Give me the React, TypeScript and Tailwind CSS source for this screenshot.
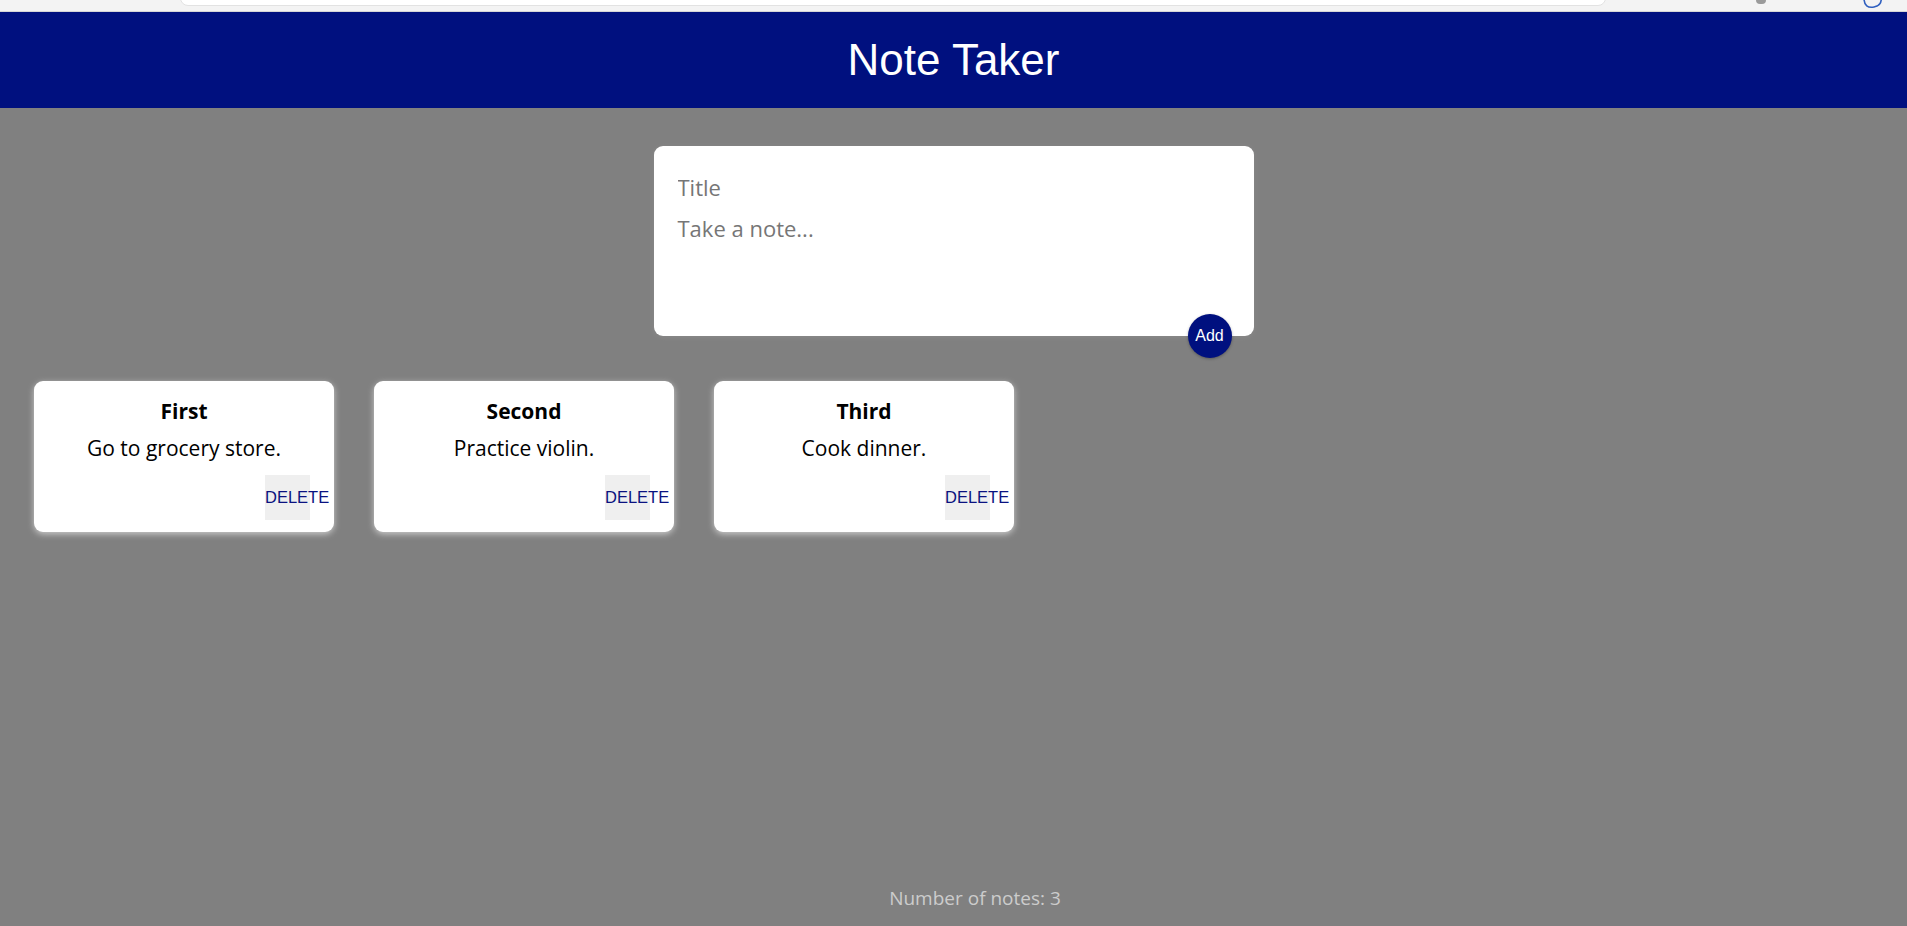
import React, { useState } from 'react';

type Note = { title: string; content: string };

const initialNotes: Note[] = [
  { title: 'First', content: 'Go to grocery store.' },
  { title: 'Second', content: 'Practice violin.' },
  { title: 'Third', content: 'Cook dinner.' },
];

const styles = {
  page: 'h-screen flex flex-col bg-[#808080] overflow-hidden font-["Open_Sans","Noto_Sans",sans-serif]',
  chrome: 'relative h-[12px] shrink-0 bg-[#f3f3f3] border-b border-[#d6d6d6]',
  header: 'h-[96px] shrink-0 flex items-center justify-center bg-[#00107f]',
  title: 'text-white text-[44px] leading-[50px] font-["Comic_Sans_MS","Liberation_Sans",sans-serif]',
  form: 'relative mx-auto mt-[38px] w-[600px] h-[190px] bg-white rounded-[9px] pt-[20px] px-[19px] shadow-[0_1px_5px_#8a8989]',
  input: 'block w-full h-[42px] p-[5px] text-[22px] leading-[30px] outline-none placeholder:text-[#767676]',
  textarea: 'block w-full h-[100px] p-[5px] text-[22px] leading-[30px] outline-none resize-none overflow-hidden placeholder:text-[#767676]',
  add: 'absolute right-[22px] bottom-[-22px] w-[44px] h-[44px] rounded-full bg-[#00107f] text-white text-[16px] font-["Liberation_Sans",sans-serif] flex items-center justify-center shadow-[0_1px_3px_rgba(0,0,0,0.3)]',
  notes: 'flex flex-row gap-[40px] pl-[34px] mt-[45px]',
  note: 'w-[300px] h-[151px] bg-white rounded-[9px] pt-[16px] pb-[12px] text-black text-center flex flex-col shadow-[0_2px_6px_#cccccc]',
  noteTitle: 'text-[21px] leading-[28px] font-bold',
  noteBody: 'mt-[9px] text-[21px] leading-[28px]',
  del: 'self-end mt-[13px] mr-[24px] w-[45px] h-[45px] bg-[#efefef] flex items-center',
  delText: 'whitespace-nowrap text-[16.5px] text-[#0a1280] font-["Liberation_Sans",sans-serif]',
  footer: 'pb-[15px] pl-[43px] text-center text-[19px] leading-[26px] text-[#cccccc]',
};

function NoteCard({ note, onDelete }: { note: Note; onDelete: () => void }) {
  return (
    <div className={styles.note}>
      <h1 className={styles.noteTitle}>{note.title}</h1>
      <p className={styles.noteBody}>{note.content}</p>
      <button className={styles.del} onClick={onDelete}>
        <span className={styles.delText}>DELETE</span>
      </button>
    </div>
  );
}

export default function App() {
  const [notes, setNotes] = useState<Note[]>(initialNotes);
  const [draft, setDraft] = useState<Note>({ title: '', content: '' });

  const addNote = (e: React.FormEvent) => {
    e.preventDefault();
    if (!draft.title && !draft.content) return;
    setNotes([...notes, draft]);
    setDraft({ title: '', content: '' });
  };

  return (
    <div className={styles.page}>
      {/* browser chrome strip at the top of the capture */}
      <div className={styles.chrome}>
        <div className="absolute left-[180px] top-[-10px] w-[1426px] h-[16px] bg-white rounded-b-[8px] border border-[#e2e2e2]" />
        <div className="absolute left-[1756px] top-[-4px] w-[10px] h-[8px] rounded-full bg-[#9a9a9a]" />
        <svg className="absolute left-[1862px] top-[-6px]" width="22" height="16" viewBox="0 0 22 16">
          <path d="M2 4 C2 12, 6 14, 12 13 C18 12, 20 8, 19 2" fill="none" stroke="#2f5fbf" strokeWidth="1.6" />
        </svg>
      </div>

      <header className={styles.header}>
        <h1 className={styles.title}>Note Taker</h1>
      </header>

      <main className="flex-1">
        <form className={styles.form} onSubmit={addNote}>
          <input
            className={styles.input}
            placeholder="Title"
            value={draft.title}
            onChange={(e) => setDraft({ ...draft, title: e.target.value })}
          />
          <textarea
            className={styles.textarea}
            placeholder="Take a note..."
            rows={3}
            value={draft.content}
            onChange={(e) => setDraft({ ...draft, content: e.target.value })}
          />
          <button type="submit" className={styles.add}>Add</button>
        </form>

        <div className={styles.notes}>
          {notes.map((n, i) => (
            <NoteCard key={i} note={n} onDelete={() => setNotes(notes.filter((_, j) => j !== i))} />
          ))}
        </div>
      </main>

      <footer className={styles.footer}>
        <p>Number of notes: {notes.length}</p>
      </footer>
    </div>
  );
}
